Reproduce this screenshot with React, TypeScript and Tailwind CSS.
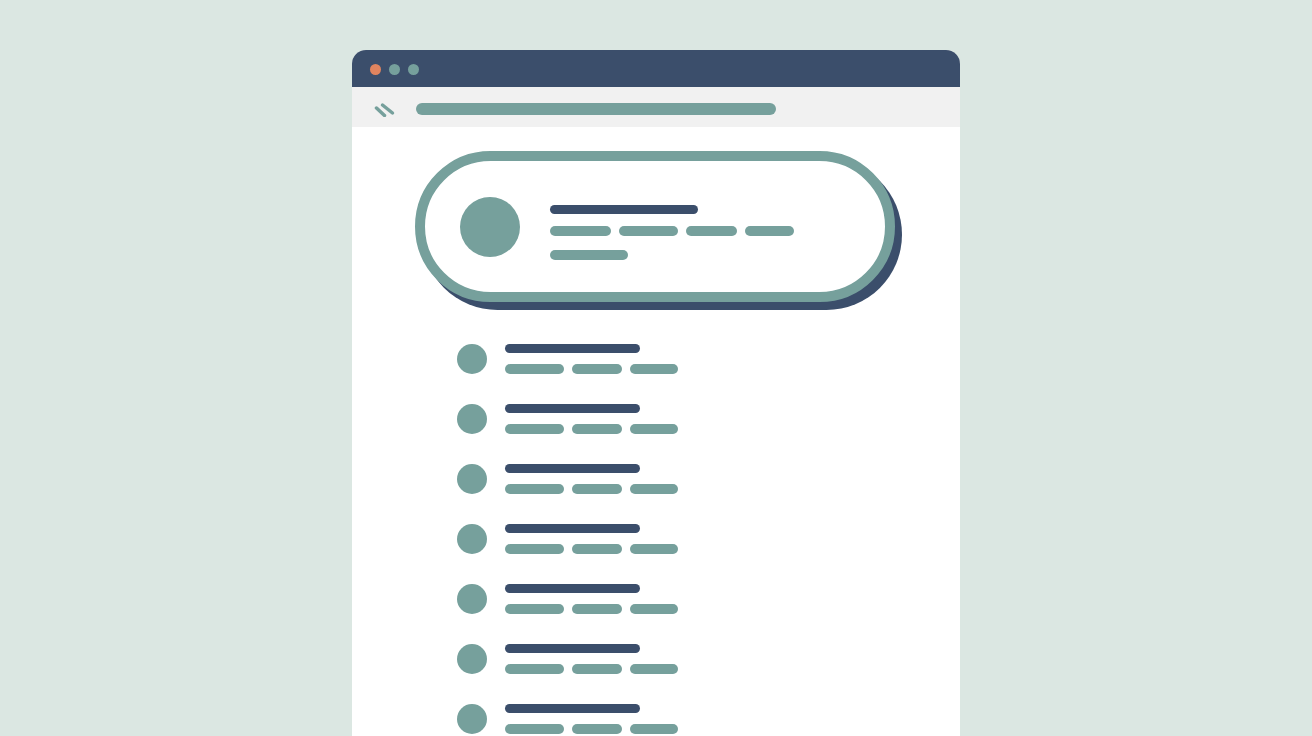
import React from "react";

const rows = Array.from({ length: 7 }, (_, i) => i);

function Pill({ className }: { className: string }) {
  return <div className={`rounded-full ${className}`} />;
}

export default function App() {
  return (
    <div className="flex h-[736px] w-full justify-center overflow-hidden bg-[#dbe7e2] pt-[50px] font-['Liberation_Sans',sans-serif]">
      <div className="flex w-[608px] flex-col overflow-hidden rounded-t-[14px] bg-white">
        {/* title bar */}
        <div className="flex h-[37px] shrink-0 items-center gap-[8px] bg-[#3b4e6b] pl-[18px] pt-[1px]">
          <div className="h-[11px] w-[11px] rounded-full bg-[#e0845f]" />
          <div className="h-[11px] w-[11px] rounded-full bg-[#76a09c]" />
          <div className="h-[11px] w-[11px] rounded-full bg-[#76a09c]" />
        </div>

        {/* toolbar */}
        <div className="flex h-[40px] shrink-0 items-center bg-[#f1f1f1] pl-[20px]">
          <svg width="26" height="20" viewBox="0 0 26 20" fill="none">
            <path d="M4.5 11 L12.5 18.5" stroke="#76a09c" strokeWidth="3.5" strokeLinecap="round" />
            <path d="M10.5 8 L20.5 16" stroke="#76a09c" strokeWidth="3.5" strokeLinecap="round" />
          </svg>
          <Pill className="ml-[18px] mt-[4px] h-[12px] w-[360px] bg-[#76a09c]" />
        </div>

        {/* body */}
        <div className="flex flex-col pl-[63px] pt-[24px]">
          <div className="flex h-[151px] w-[480px] items-center rounded-full border-[10px] border-[#76a09c] bg-white pl-[35px] shadow-[7px_8px_0_#3b4e6b]">
            <div className="h-[60px] w-[60px] shrink-0 rounded-full bg-[#76a09c]" />
            <div className="ml-[30px] mt-[12px] flex flex-col">
              <Pill className="h-[9px] w-[148px] bg-[#3b4e6b]" />
              <div className="mt-[12px] flex gap-[8px]">
                <Pill className="h-[10px] w-[61px] bg-[#76a09c]" />
                <Pill className="h-[10px] w-[59px] bg-[#76a09c]" />
                <Pill className="h-[10px] w-[51px] bg-[#76a09c]" />
                <Pill className="h-[10px] w-[49px] bg-[#76a09c]" />
              </div>
              <Pill className="mt-[14px] h-[10px] w-[78px] bg-[#76a09c]" />
            </div>
          </div>

          <div className="ml-[42px] mt-[42px] flex flex-col gap-[30px]">
            {rows.map((i) => (
              <div key={i} className="flex h-[30px] items-center">
                <div className="h-[30px] w-[30px] shrink-0 rounded-full bg-[#76a09c]" />
                <div className="ml-[18px] flex flex-col">
                  <Pill className="h-[9px] w-[135px] bg-[#3b4e6b]" />
                  <div className="mt-[11px] flex gap-[8px]">
                    <Pill className="h-[10px] w-[59px] bg-[#76a09c]" />
                    <Pill className="h-[10px] w-[50px] bg-[#76a09c]" />
                    <Pill className="h-[10px] w-[48px] bg-[#76a09c]" />
                  </div>
                </div>
              </div>
            ))}
          </div>
        </div>
      </div>
    </div>
  );
}
